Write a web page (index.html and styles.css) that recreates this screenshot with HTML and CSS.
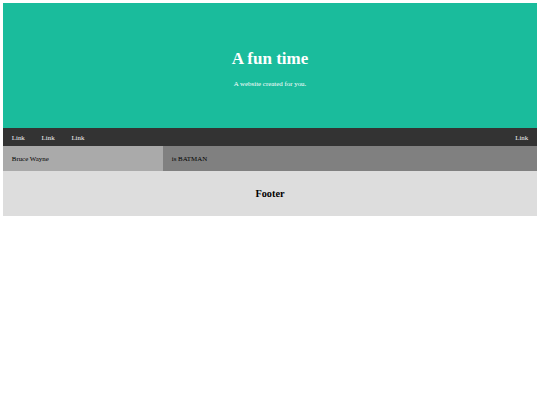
FILE: index.html
```html
<!DOCTYPE html>
<html>
<head>
<meta charset="utf-8">
<link rel="stylesheet" href="styles.css">
</head>
<body>
<div class="header">
  <h1>A fun time</h1>
  <p>A website created for you.</p>
</div>
<div class="navbar">
  <a href="#">Link</a>
  <a href="#">Link</a>
  <a href="#">Link</a>
  <a href="#" class="right">Link</a>
</div>
<div class="row">
  <div class="side">Bruce Wayne</div>
  <div class="main">is BATMAN</div>
</div>
<div class="footer">
  <h2>Footer</h2>
</div>
</body>
</html>
```
FILE: styles.css
```css
body {
  margin: 3.4px;
  font-family: "Liberation Serif", "Times New Roman", serif;
  font-size: 6.9px;
  background: #fff;
}
.header {
  padding: 34px 34px;
  text-align: center;
  background: #1abc9c;
  color: #fff;
}
.header h1 {
  font-size: 17px;
  margin: 11.3px 0;
}
.header p {
  margin: 6.7px 0;
}
.navbar {
  display: flex;
  background: #333;
}
.navbar a {
  display: block;
  color: #f2f2f2;
  text-decoration: none;
  padding: 5.9px 8.4px;
}
.navbar a.right {
  margin-left: auto;
}
.row {
  display: flex;
}
.side {
  flex: 0 0 30%;
  background: #aaa;
  padding: 8.6px 8.4px;
  box-sizing: border-box;
}
.main {
  flex: 1;
  background: #808080;
  padding: 8.6px 8.4px;
}
.footer {
  padding: 9px 8.4px;
  text-align: center;
  background: #ddd;
}
.footer h2 {
  font-size: 10.3px;
  margin: 8.4px 0;
}
```
